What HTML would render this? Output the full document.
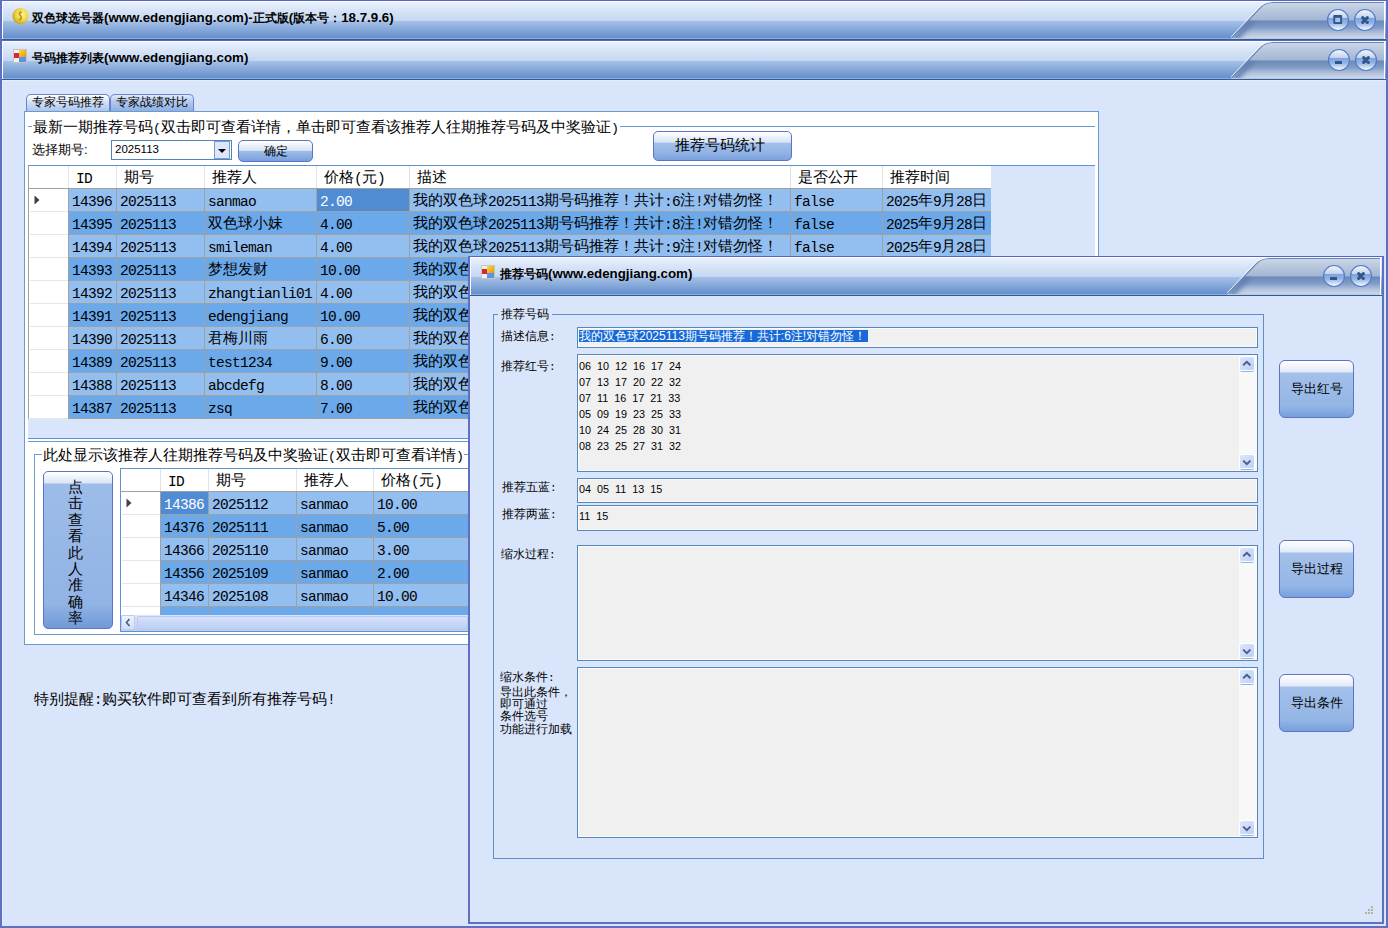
<!DOCTYPE html><html><head><meta charset="utf-8"><style>
*{margin:0;padding:0;box-sizing:border-box}
html,body{width:1388px;height:928px;overflow:hidden;background:#D9E5FA;font-family:"Liberation Sans",sans-serif;color:#000}
.abs{position:absolute}
.tb{position:absolute;height:40px;background:linear-gradient(to bottom,#5566C0 0,#5566C0 1px,#FFFFFF 1px,#FFFFFF 2px,#E8F0FD 2px,#C3D6F1 21px,#A6C1E7 21px,#6590CC 38px,#7CB0F8 38px,#7CB0F8 39px,#3F5A80 39px,#3F5A80 40px)}
.ttl{position:absolute;font-weight:bold;font-size:12px;white-space:nowrap;line-height:15px;color:#000}
.ttl .a{font-size:13.3px}
.grid{position:absolute;background:#D9E5FA;overflow:hidden}
.cell{position:absolute;white-space:nowrap;overflow:hidden;font-size:15px;line-height:22px;padding-left:3px}
.cell .a{font-family:"Liberation Mono",monospace;font-size:14.5px;letter-spacing:-0.7px;position:relative;top:1px}
.mono{font-family:"Liberation Mono",monospace}
.m .a{font-family:"Liberation Mono",monospace;font-size:0.92em}
.btn{position:absolute;border:1px solid #5C74C6;border-radius:5px;background:linear-gradient(to bottom,#FFFFFF 0%,#DCE7F7 30%,#A8C3EB 31%,#8FB2E5 75%,#76A0DC 100%);text-align:center;white-space:nowrap}
.fld{position:absolute;background:#F0F0F0;border:1px solid #5588BE;box-shadow:inset 0 0 0 1px #FCFAF6}
.lbl{position:absolute;font-size:12.5px;white-space:nowrap;line-height:14px}
.sb{position:absolute;background:#F8F8F8}
.sbb{position:absolute;width:14px;height:13px;border-radius:2px;background:linear-gradient(135deg,#DCE6FA,#BDD0F8);box-shadow:0 0 0 1px #FFFFFF,0 2px 0 0 #94B2E2}
</style></head><body>
<div class="abs" style="left:0;top:0;width:2px;height:928px;background:#5F70C2"></div>
<div class="abs" style="left:1386px;top:0;width:2px;height:928px;background:#5F70C2"></div>
<div class="abs" style="left:0;top:926px;width:1388px;height:2px;background:#5F70C2"></div>
<div class="abs" style="left:2px;top:80px;width:1px;height:846px;background:#E6EEFC"></div>
<div class="abs" style="left:2px;top:80px;width:1384px;height:1px;background:#E6EEFC"></div>
<div class="tb" style="left:2px;top:0px;width:1384px"></div>
<div class="abs" style="left:2px;top:1px;width:1px;height:38px;background:#FFFFFF"></div>
<svg class="abs" style="left:1231px;top:0px" width="155" height="40" viewBox="0 0 155 40">
<defs>
<linearGradient id="tg0" x1="0" y1="0" x2="0" y2="40" gradientUnits="userSpaceOnUse">
<stop offset="0.05" stop-color="#CCD7E7"/><stop offset="0.51" stop-color="#A3B5D3"/>
<stop offset="0.515" stop-color="#6A88B8"/><stop offset="0.68" stop-color="#7F9AC5"/><stop offset="0.82" stop-color="#AFC0DB"/><stop offset="0.94" stop-color="#CAD4E6"/>
</linearGradient>
<clipPath id="cp0"><path d="M0,38.5 L29,8 Q34,2.5 42,2.5 L154,2.5 L154,38.5 Z"/></clipPath>
<filter id="bl0" x="-50%" y="-50%" width="200%" height="200%"><feGaussianBlur stdDeviation="2.2"/></filter></defs>
<path d="M0,38.5 L29,8 Q34,2.5 42,2.5 L154,2.5 L154,38.5 Z" fill="url(#tg0)"/>
<clipPath id="cq0"><rect x="0" y="20.6" width="155" height="19"/></clipPath>
<g clip-path="url(#cp0)"><g clip-path="url(#cq0)"><path d="M3,40 L22,19" stroke="#5F7DB0" stroke-width="7" filter="url(#bl0)" opacity="0.85"/></g></g>
<path d="M0.5,38 L29,8 Q34,2.5 42,2.5 L154,2.5" fill="none" stroke="#6A86B4" stroke-width="1.1"/>
<path d="M-0.8,38 L28.2,7.3 Q33.2,1.8 42,1.6" fill="none" stroke="#FFFFFF" stroke-width="0.9" opacity="0.9"/>
<rect x="40" y="1" width="155" height="1" fill="#F4F7FC"/>
<rect x="0" y="38" width="155" height="1" fill="#A9CBF6"/>
<rect x="153" y="1" width="1" height="38" fill="#FFFFFF"/>
</svg>
<svg class="abs" style="left:11px;top:7px" width="18" height="18" viewBox="0 0 18 18">
<defs><radialGradient id="coin" cx="0.6" cy="0.4" r="0.7"><stop offset="0" stop-color="#FFF7A0"/><stop offset="0.6" stop-color="#EAD040"/><stop offset="1" stop-color="#B89000"/></radialGradient></defs>
<circle cx="9.5" cy="9" r="8" fill="url(#coin)"/>
<path d="M11,5.5 Q8,4.8 8.3,7.3 Q10.5,8.8 10.5,10.8 Q10,13 7.5,12.5" fill="none" stroke="#B89000" stroke-width="1.2"/><path d="M9.3,3.5 L9.3,14.5" stroke="#C8A000" stroke-width="0.8"/>
</svg>
<div class="ttl" style="left:32px;top:10px">双色球选号器<span class="a">(www.edengjiang.com)-</span>正式版<span class="a">(</span>版本号：<span class="a">18.7.9.6)</span></div>
<svg class="abs" style="left:1326px;top:8px" width="24" height="24" viewBox="0 0 24 24">
<defs><linearGradient id="bg00" x1="0" y1="0" x2="0" y2="1">
<stop offset="0.05" stop-color="#EEF2FA"/><stop offset="0.4" stop-color="#C4D2EA"/><stop offset="0.42" stop-color="#7FA3DA"/><stop offset="0.65" stop-color="#95B4E4"/><stop offset="0.95" stop-color="#F2F6FC"/></linearGradient></defs>
<circle cx="12" cy="12" r="10.5" fill="url(#bg00)" stroke="#4C7CCC" stroke-width="1.1"/>
<rect x="7.3" y="7" width="8.8" height="9" rx="1" fill="#2F5590"/><rect x="9.2" y="9.8" width="5" height="4.3" fill="#A9C1E8"/>
</svg>
<svg class="abs" style="left:1353px;top:8px" width="24" height="24" viewBox="0 0 24 24">
<defs><linearGradient id="bg01" x1="0" y1="0" x2="0" y2="1">
<stop offset="0.05" stop-color="#EEF2FA"/><stop offset="0.4" stop-color="#C4D2EA"/><stop offset="0.42" stop-color="#7FA3DA"/><stop offset="0.65" stop-color="#95B4E4"/><stop offset="0.95" stop-color="#F2F6FC"/></linearGradient></defs>
<circle cx="12" cy="12" r="10.5" fill="url(#bg01)" stroke="#4C7CCC" stroke-width="1.1"/>
<path d="M9.6,9.6 L14.4,14.4 M14.4,9.6 L9.6,14.4" stroke="#2F5590" stroke-width="3" stroke-linecap="round"/>
</svg>
<div class="tb" style="left:2px;top:40px;width:1384px"></div>
<div class="abs" style="left:2px;top:41px;width:1px;height:38px;background:#FFFFFF"></div>
<svg class="abs" style="left:1231px;top:40px" width="155" height="40" viewBox="0 0 155 40">
<defs>
<linearGradient id="tg40" x1="0" y1="0" x2="0" y2="40" gradientUnits="userSpaceOnUse">
<stop offset="0.05" stop-color="#CCD7E7"/><stop offset="0.51" stop-color="#A3B5D3"/>
<stop offset="0.515" stop-color="#6A88B8"/><stop offset="0.68" stop-color="#7F9AC5"/><stop offset="0.82" stop-color="#AFC0DB"/><stop offset="0.94" stop-color="#CAD4E6"/>
</linearGradient>
<clipPath id="cp40"><path d="M0,38.5 L29,8 Q34,2.5 42,2.5 L154,2.5 L154,38.5 Z"/></clipPath>
<filter id="bl40" x="-50%" y="-50%" width="200%" height="200%"><feGaussianBlur stdDeviation="2.2"/></filter></defs>
<path d="M0,38.5 L29,8 Q34,2.5 42,2.5 L154,2.5 L154,38.5 Z" fill="url(#tg40)"/>
<clipPath id="cq40"><rect x="0" y="20.6" width="155" height="19"/></clipPath>
<g clip-path="url(#cp40)"><g clip-path="url(#cq40)"><path d="M3,40 L22,19" stroke="#5F7DB0" stroke-width="7" filter="url(#bl40)" opacity="0.85"/></g></g>
<path d="M0.5,38 L29,8 Q34,2.5 42,2.5 L154,2.5" fill="none" stroke="#6A86B4" stroke-width="1.1"/>
<path d="M-0.8,38 L28.2,7.3 Q33.2,1.8 42,1.6" fill="none" stroke="#FFFFFF" stroke-width="0.9" opacity="0.9"/>
<rect x="40" y="1" width="155" height="1" fill="#F4F7FC"/>
<rect x="0" y="38" width="155" height="1" fill="#A9CBF6"/>
<rect x="153" y="1" width="1" height="38" fill="#FFFFFF"/>
</svg>
<svg class="abs" style="left:11px;top:47px" width="18" height="18" viewBox="0 0 18 18">
<rect x="2.5" y="2.5" width="13" height="13" fill="#EEF2F8" stroke="#CCC4BC" stroke-width="1"/>
<linearGradient id="ic40" x1="0" y1="0" x2="1" y2="1"><stop offset="0" stop-color="#FFD84A"/><stop offset="1" stop-color="#E09A00"/></linearGradient>
<rect x="8" y="3" width="7" height="7" fill="url(#ic40)"/>
<rect x="3" y="6" width="5" height="5" fill="#D42A2A"/>
<rect x="8" y="10" width="7" height="5" fill="#5A94EA"/>
</svg>
<div class="ttl" style="left:32px;top:50px">号码推荐列表<span class="a">(www.edengjiang.com)</span></div>
<svg class="abs" style="left:1327px;top:48px" width="24" height="24" viewBox="0 0 24 24">
<defs><linearGradient id="bg400" x1="0" y1="0" x2="0" y2="1">
<stop offset="0.05" stop-color="#EEF2FA"/><stop offset="0.4" stop-color="#C4D2EA"/><stop offset="0.42" stop-color="#7FA3DA"/><stop offset="0.65" stop-color="#95B4E4"/><stop offset="0.95" stop-color="#F2F6FC"/></linearGradient></defs>
<circle cx="12" cy="12" r="10.5" fill="url(#bg400)" stroke="#4C7CCC" stroke-width="1.1"/>
<rect x="8" y="13" width="7" height="3" fill="#2F5590"/>
</svg>
<svg class="abs" style="left:1354px;top:48px" width="24" height="24" viewBox="0 0 24 24">
<defs><linearGradient id="bg401" x1="0" y1="0" x2="0" y2="1">
<stop offset="0.05" stop-color="#EEF2FA"/><stop offset="0.4" stop-color="#C4D2EA"/><stop offset="0.42" stop-color="#7FA3DA"/><stop offset="0.65" stop-color="#95B4E4"/><stop offset="0.95" stop-color="#F2F6FC"/></linearGradient></defs>
<circle cx="12" cy="12" r="10.5" fill="url(#bg401)" stroke="#4C7CCC" stroke-width="1.1"/>
<path d="M9.6,9.6 L14.4,14.4 M14.4,9.6 L9.6,14.4" stroke="#2F5590" stroke-width="3" stroke-linecap="round"/>
</svg>
<div class="abs" style="left:26px;top:94px;width:84px;height:18px;border:1px solid #6A84CC;border-bottom:none;border-radius:5px 5px 0 0;background:linear-gradient(to bottom,#FFFFFF,#D5E2F6 40%,#A9C2EA);font-size:12px;line-height:14px;text-align:center">专家号码推荐</div>
<div class="abs" style="left:110px;top:94px;width:84px;height:17px;border:1px solid #6A84CC;border-bottom:none;border-radius:5px 5px 0 0;background:linear-gradient(to bottom,#E2EBFA,#B4CAEE 40%,#8EB0E4);font-size:12px;line-height:14px;text-align:center">专家战绩对比</div>
<div class="abs" style="left:24px;top:111px;width:1075px;height:534px;background:#FFFFFF;border:1px solid #6C9BD0"></div>
<div class="abs" style="left:28px;top:126px;width:4px;height:1px;background:#6C9BD0"></div>
<div class="abs" style="left:620px;top:126px;width:475px;height:1px;background:#6C9BD0"></div>
<div class="abs m" style="left:33px;top:119px;font-size:14.5px;line-height:16px;white-space:nowrap">最新一期推荐号码<span class="a">(</span>双击即可查看详情，单击即可查看该推荐人往期推荐号码及中奖验证<span class="a">)</span></div>
<div class="abs" style="left:32px;top:142px;font-size:13px;line-height:16px;white-space:nowrap">选择期号:</div>
<div class="abs" style="left:111px;top:140px;width:121px;height:20px;background:#FFFFFF;border:1px solid #4F83C2"></div>
<div class="abs" style="left:115px;top:142px;font-size:11.5px;line-height:14px">2025113</div>
<div class="abs" style="left:214px;top:141px;width:16px;height:18px;background:#DCE6F8;border:1px solid #7A9CCB"></div>
<svg class="abs" style="left:214px;top:141px" width="16" height="18"><path d="M4,8 L12,8 L8,12 Z" fill="#000"/></svg>
<div class="btn" style="left:238px;top:140px;width:75px;height:22px;font-size:12px;line-height:20px;background:linear-gradient(to bottom,#FFFFFF 0%,#D9E4F5 47%,#9DBCE8 52%,#89ADE2 80%,#76A0DC 100%)">确定</div>
<div class="btn" style="left:653px;top:131px;width:139px;height:30px;font-size:15px;line-height:26px;padding-right:5px;background:linear-gradient(to bottom,#FFFFFF 0%,#D9E4F5 36%,#A3C0EA 40%,#8DB0E4 80%,#79A2DC 100%)">推荐号码统计</div>
<div class="grid" style="left:28px;top:165px;width:1067px;height:274px;border-top:1px solid #5F93CF;border-bottom:1px solid #5F93CF"></div>
<div class="abs" style="left:28px;top:166px;width:963px;height:22px;background:#FFFFFF"></div>
<div class="abs" style="left:28px;top:188px;width:963px;height:1px;background:#A0A0A0"></div>
<div class="abs" style="left:68px;top:166px;width:1px;height:22px;background:#E2E2E2"></div>
<div class="abs" style="left:116px;top:166px;width:1px;height:22px;background:#E2E2E2"></div>
<div class="abs" style="left:204px;top:166px;width:1px;height:22px;background:#E2E2E2"></div>
<div class="abs" style="left:316px;top:166px;width:1px;height:22px;background:#E2E2E2"></div>
<div class="abs" style="left:409px;top:166px;width:1px;height:22px;background:#E2E2E2"></div>
<div class="abs" style="left:790px;top:166px;width:1px;height:22px;background:#E2E2E2"></div>
<div class="abs" style="left:882px;top:166px;width:1px;height:22px;background:#E2E2E2"></div>
<div class="abs" style="left:28px;top:166px;width:1px;height:22px;background:#A0A0A0"></div>
<div class="cell" style="left:69px;top:166px;width:47px;padding-left:7px;line-height:22px"><span class="a">ID</span></div>
<div class="cell" style="left:117px;top:166px;width:87px;padding-left:7px;line-height:22px">期号</div>
<div class="cell" style="left:205px;top:166px;width:111px;padding-left:7px;line-height:22px">推荐人</div>
<div class="cell" style="left:317px;top:166px;width:92px;padding-left:7px;line-height:22px">价格<span class="a">(</span>元<span class="a">)</span></div>
<div class="cell" style="left:410px;top:166px;width:380px;padding-left:7px;line-height:22px">描述</div>
<div class="cell" style="left:791px;top:166px;width:91px;padding-left:7px;line-height:22px">是否公开</div>
<div class="cell" style="left:883px;top:166px;width:108px;padding-left:7px;line-height:22px">推荐时间</div>
<div class="abs" style="left:28px;top:189px;width:40px;height:23px;background:#FFFFFF;border-left:1px solid #A0A0A0"></div>
<div class="abs" style="left:30px;top:211px;width:38px;height:1px;background:#E6E6E6"></div>
<div class="abs" style="left:68px;top:189px;width:923px;height:23px;background:#92BEF0;border-left:1px solid #A0A0A0;border-bottom:1px solid #A0A0A0"></div>
<div class="abs" style="left:116px;top:189px;width:1px;height:23px;background:#A0A0A0"></div>
<div class="abs" style="left:204px;top:189px;width:1px;height:23px;background:#A0A0A0"></div>
<div class="abs" style="left:316px;top:189px;width:1px;height:23px;background:#A0A0A0"></div>
<div class="abs" style="left:409px;top:189px;width:1px;height:23px;background:#A0A0A0"></div>
<div class="abs" style="left:790px;top:189px;width:1px;height:23px;background:#A0A0A0"></div>
<div class="abs" style="left:882px;top:189px;width:1px;height:23px;background:#A0A0A0"></div>
<svg class="abs" style="left:34px;top:195px" width="8" height="10"><path d="M0.5,0.5 L5.5,5 L0.5,9.5 Z" fill="#404040"/></svg>
<div class="cell" style="left:69px;top:189px;width:47px;"><span class="a">14396</span></div>
<div class="cell" style="left:117px;top:189px;width:87px;"><span class="a">2025113</span></div>
<div class="cell" style="left:205px;top:189px;width:111px;"><span class="a">sanmao</span></div>
<div class="abs" style="left:317px;top:189px;width:92px;height:22px;background:#508CD3"></div>
<div class="cell" style="left:317px;top:189px;width:92px;color:#FFFFFF;"><span class="a">2.00</span></div>
<div class="cell" style="left:410px;top:189px;width:380px;">我的双色球<span class="a">2025113</span>期号码推荐！共计<span class="a">:6</span>注<span class="a">!</span>对错勿怪！</div>
<div class="cell" style="left:791px;top:189px;width:91px;"><span class="a">false</span></div>
<div class="cell" style="left:883px;top:189px;width:108px;"><span class="a">2025</span>年<span class="a">9</span>月<span class="a">28</span>日</div>
<div class="abs" style="left:28px;top:212px;width:40px;height:23px;background:#FFFFFF;border-left:1px solid #A0A0A0"></div>
<div class="abs" style="left:30px;top:234px;width:38px;height:1px;background:#E6E6E6"></div>
<div class="abs" style="left:68px;top:212px;width:923px;height:23px;background:#6BA9EA;border-left:1px solid #A0A0A0;border-bottom:1px solid #A0A0A0"></div>
<div class="abs" style="left:116px;top:212px;width:1px;height:23px;background:#A0A0A0"></div>
<div class="abs" style="left:204px;top:212px;width:1px;height:23px;background:#A0A0A0"></div>
<div class="abs" style="left:316px;top:212px;width:1px;height:23px;background:#A0A0A0"></div>
<div class="abs" style="left:409px;top:212px;width:1px;height:23px;background:#A0A0A0"></div>
<div class="abs" style="left:790px;top:212px;width:1px;height:23px;background:#A0A0A0"></div>
<div class="abs" style="left:882px;top:212px;width:1px;height:23px;background:#A0A0A0"></div>
<div class="cell" style="left:69px;top:212px;width:47px;"><span class="a">14395</span></div>
<div class="cell" style="left:117px;top:212px;width:87px;"><span class="a">2025113</span></div>
<div class="cell" style="left:205px;top:212px;width:111px;">双色球小妹</div>
<div class="cell" style="left:317px;top:212px;width:92px;"><span class="a">4.00</span></div>
<div class="cell" style="left:410px;top:212px;width:380px;">我的双色球<span class="a">2025113</span>期号码推荐！共计<span class="a">:8</span>注<span class="a">!</span>对错勿怪！</div>
<div class="cell" style="left:791px;top:212px;width:91px;"><span class="a">false</span></div>
<div class="cell" style="left:883px;top:212px;width:108px;"><span class="a">2025</span>年<span class="a">9</span>月<span class="a">28</span>日</div>
<div class="abs" style="left:28px;top:235px;width:40px;height:23px;background:#FFFFFF;border-left:1px solid #A0A0A0"></div>
<div class="abs" style="left:30px;top:257px;width:38px;height:1px;background:#E6E6E6"></div>
<div class="abs" style="left:68px;top:235px;width:923px;height:23px;background:#92BEF0;border-left:1px solid #A0A0A0;border-bottom:1px solid #A0A0A0"></div>
<div class="abs" style="left:116px;top:235px;width:1px;height:23px;background:#A0A0A0"></div>
<div class="abs" style="left:204px;top:235px;width:1px;height:23px;background:#A0A0A0"></div>
<div class="abs" style="left:316px;top:235px;width:1px;height:23px;background:#A0A0A0"></div>
<div class="abs" style="left:409px;top:235px;width:1px;height:23px;background:#A0A0A0"></div>
<div class="abs" style="left:790px;top:235px;width:1px;height:23px;background:#A0A0A0"></div>
<div class="abs" style="left:882px;top:235px;width:1px;height:23px;background:#A0A0A0"></div>
<div class="cell" style="left:69px;top:235px;width:47px;"><span class="a">14394</span></div>
<div class="cell" style="left:117px;top:235px;width:87px;"><span class="a">2025113</span></div>
<div class="cell" style="left:205px;top:235px;width:111px;"><span class="a">smileman</span></div>
<div class="cell" style="left:317px;top:235px;width:92px;"><span class="a">4.00</span></div>
<div class="cell" style="left:410px;top:235px;width:380px;">我的双色球<span class="a">2025113</span>期号码推荐！共计<span class="a">:9</span>注<span class="a">!</span>对错勿怪！</div>
<div class="cell" style="left:791px;top:235px;width:91px;"><span class="a">false</span></div>
<div class="cell" style="left:883px;top:235px;width:108px;"><span class="a">2025</span>年<span class="a">9</span>月<span class="a">28</span>日</div>
<div class="abs" style="left:28px;top:258px;width:40px;height:23px;background:#FFFFFF;border-left:1px solid #A0A0A0"></div>
<div class="abs" style="left:30px;top:280px;width:38px;height:1px;background:#E6E6E6"></div>
<div class="abs" style="left:68px;top:258px;width:923px;height:23px;background:#6BA9EA;border-left:1px solid #A0A0A0;border-bottom:1px solid #A0A0A0"></div>
<div class="abs" style="left:116px;top:258px;width:1px;height:23px;background:#A0A0A0"></div>
<div class="abs" style="left:204px;top:258px;width:1px;height:23px;background:#A0A0A0"></div>
<div class="abs" style="left:316px;top:258px;width:1px;height:23px;background:#A0A0A0"></div>
<div class="abs" style="left:409px;top:258px;width:1px;height:23px;background:#A0A0A0"></div>
<div class="abs" style="left:790px;top:258px;width:1px;height:23px;background:#A0A0A0"></div>
<div class="abs" style="left:882px;top:258px;width:1px;height:23px;background:#A0A0A0"></div>
<div class="cell" style="left:69px;top:258px;width:47px;"><span class="a">14393</span></div>
<div class="cell" style="left:117px;top:258px;width:87px;"><span class="a">2025113</span></div>
<div class="cell" style="left:205px;top:258px;width:111px;">梦想发财</div>
<div class="cell" style="left:317px;top:258px;width:92px;"><span class="a">10.00</span></div>
<div class="cell" style="left:410px;top:258px;width:380px;">我的双色球<span class="a">2025113</span>期号码推荐！共计<span class="a">:6</span>注<span class="a">!</span>对错勿怪！</div>
<div class="cell" style="left:791px;top:258px;width:91px;"><span class="a">false</span></div>
<div class="cell" style="left:883px;top:258px;width:108px;"><span class="a">2025</span>年<span class="a">9</span>月<span class="a">28</span>日</div>
<div class="abs" style="left:28px;top:281px;width:40px;height:23px;background:#FFFFFF;border-left:1px solid #A0A0A0"></div>
<div class="abs" style="left:30px;top:303px;width:38px;height:1px;background:#E6E6E6"></div>
<div class="abs" style="left:68px;top:281px;width:923px;height:23px;background:#92BEF0;border-left:1px solid #A0A0A0;border-bottom:1px solid #A0A0A0"></div>
<div class="abs" style="left:116px;top:281px;width:1px;height:23px;background:#A0A0A0"></div>
<div class="abs" style="left:204px;top:281px;width:1px;height:23px;background:#A0A0A0"></div>
<div class="abs" style="left:316px;top:281px;width:1px;height:23px;background:#A0A0A0"></div>
<div class="abs" style="left:409px;top:281px;width:1px;height:23px;background:#A0A0A0"></div>
<div class="abs" style="left:790px;top:281px;width:1px;height:23px;background:#A0A0A0"></div>
<div class="abs" style="left:882px;top:281px;width:1px;height:23px;background:#A0A0A0"></div>
<div class="cell" style="left:69px;top:281px;width:47px;"><span class="a">14392</span></div>
<div class="cell" style="left:117px;top:281px;width:87px;"><span class="a">2025113</span></div>
<div class="cell" style="left:205px;top:281px;width:111px;"><span class="a">zhangtianli01</span></div>
<div class="cell" style="left:317px;top:281px;width:92px;"><span class="a">4.00</span></div>
<div class="cell" style="left:410px;top:281px;width:380px;">我的双色球<span class="a">2025113</span>期号码推荐！共计<span class="a">:6</span>注<span class="a">!</span>对错勿怪！</div>
<div class="cell" style="left:791px;top:281px;width:91px;"><span class="a">false</span></div>
<div class="cell" style="left:883px;top:281px;width:108px;"><span class="a">2025</span>年<span class="a">9</span>月<span class="a">28</span>日</div>
<div class="abs" style="left:28px;top:304px;width:40px;height:23px;background:#FFFFFF;border-left:1px solid #A0A0A0"></div>
<div class="abs" style="left:30px;top:326px;width:38px;height:1px;background:#E6E6E6"></div>
<div class="abs" style="left:68px;top:304px;width:923px;height:23px;background:#6BA9EA;border-left:1px solid #A0A0A0;border-bottom:1px solid #A0A0A0"></div>
<div class="abs" style="left:116px;top:304px;width:1px;height:23px;background:#A0A0A0"></div>
<div class="abs" style="left:204px;top:304px;width:1px;height:23px;background:#A0A0A0"></div>
<div class="abs" style="left:316px;top:304px;width:1px;height:23px;background:#A0A0A0"></div>
<div class="abs" style="left:409px;top:304px;width:1px;height:23px;background:#A0A0A0"></div>
<div class="abs" style="left:790px;top:304px;width:1px;height:23px;background:#A0A0A0"></div>
<div class="abs" style="left:882px;top:304px;width:1px;height:23px;background:#A0A0A0"></div>
<div class="cell" style="left:69px;top:304px;width:47px;"><span class="a">14391</span></div>
<div class="cell" style="left:117px;top:304px;width:87px;"><span class="a">2025113</span></div>
<div class="cell" style="left:205px;top:304px;width:111px;"><span class="a">edengjiang</span></div>
<div class="cell" style="left:317px;top:304px;width:92px;"><span class="a">10.00</span></div>
<div class="cell" style="left:410px;top:304px;width:380px;">我的双色球<span class="a">2025113</span>期号码推荐！共计<span class="a">:6</span>注<span class="a">!</span>对错勿怪！</div>
<div class="cell" style="left:791px;top:304px;width:91px;"><span class="a">false</span></div>
<div class="cell" style="left:883px;top:304px;width:108px;"><span class="a">2025</span>年<span class="a">9</span>月<span class="a">28</span>日</div>
<div class="abs" style="left:28px;top:327px;width:40px;height:23px;background:#FFFFFF;border-left:1px solid #A0A0A0"></div>
<div class="abs" style="left:30px;top:349px;width:38px;height:1px;background:#E6E6E6"></div>
<div class="abs" style="left:68px;top:327px;width:923px;height:23px;background:#92BEF0;border-left:1px solid #A0A0A0;border-bottom:1px solid #A0A0A0"></div>
<div class="abs" style="left:116px;top:327px;width:1px;height:23px;background:#A0A0A0"></div>
<div class="abs" style="left:204px;top:327px;width:1px;height:23px;background:#A0A0A0"></div>
<div class="abs" style="left:316px;top:327px;width:1px;height:23px;background:#A0A0A0"></div>
<div class="abs" style="left:409px;top:327px;width:1px;height:23px;background:#A0A0A0"></div>
<div class="abs" style="left:790px;top:327px;width:1px;height:23px;background:#A0A0A0"></div>
<div class="abs" style="left:882px;top:327px;width:1px;height:23px;background:#A0A0A0"></div>
<div class="cell" style="left:69px;top:327px;width:47px;"><span class="a">14390</span></div>
<div class="cell" style="left:117px;top:327px;width:87px;"><span class="a">2025113</span></div>
<div class="cell" style="left:205px;top:327px;width:111px;">君梅川雨</div>
<div class="cell" style="left:317px;top:327px;width:92px;"><span class="a">6.00</span></div>
<div class="cell" style="left:410px;top:327px;width:380px;">我的双色球<span class="a">2025113</span>期号码推荐！共计<span class="a">:6</span>注<span class="a">!</span>对错勿怪！</div>
<div class="cell" style="left:791px;top:327px;width:91px;"><span class="a">false</span></div>
<div class="cell" style="left:883px;top:327px;width:108px;"><span class="a">2025</span>年<span class="a">9</span>月<span class="a">28</span>日</div>
<div class="abs" style="left:28px;top:350px;width:40px;height:23px;background:#FFFFFF;border-left:1px solid #A0A0A0"></div>
<div class="abs" style="left:30px;top:372px;width:38px;height:1px;background:#E6E6E6"></div>
<div class="abs" style="left:68px;top:350px;width:923px;height:23px;background:#6BA9EA;border-left:1px solid #A0A0A0;border-bottom:1px solid #A0A0A0"></div>
<div class="abs" style="left:116px;top:350px;width:1px;height:23px;background:#A0A0A0"></div>
<div class="abs" style="left:204px;top:350px;width:1px;height:23px;background:#A0A0A0"></div>
<div class="abs" style="left:316px;top:350px;width:1px;height:23px;background:#A0A0A0"></div>
<div class="abs" style="left:409px;top:350px;width:1px;height:23px;background:#A0A0A0"></div>
<div class="abs" style="left:790px;top:350px;width:1px;height:23px;background:#A0A0A0"></div>
<div class="abs" style="left:882px;top:350px;width:1px;height:23px;background:#A0A0A0"></div>
<div class="cell" style="left:69px;top:350px;width:47px;"><span class="a">14389</span></div>
<div class="cell" style="left:117px;top:350px;width:87px;"><span class="a">2025113</span></div>
<div class="cell" style="left:205px;top:350px;width:111px;"><span class="a">test1234</span></div>
<div class="cell" style="left:317px;top:350px;width:92px;"><span class="a">9.00</span></div>
<div class="cell" style="left:410px;top:350px;width:380px;">我的双色球<span class="a">2025113</span>期号码推荐！共计<span class="a">:6</span>注<span class="a">!</span>对错勿怪！</div>
<div class="cell" style="left:791px;top:350px;width:91px;"><span class="a">false</span></div>
<div class="cell" style="left:883px;top:350px;width:108px;"><span class="a">2025</span>年<span class="a">9</span>月<span class="a">28</span>日</div>
<div class="abs" style="left:28px;top:373px;width:40px;height:23px;background:#FFFFFF;border-left:1px solid #A0A0A0"></div>
<div class="abs" style="left:30px;top:395px;width:38px;height:1px;background:#E6E6E6"></div>
<div class="abs" style="left:68px;top:373px;width:923px;height:23px;background:#92BEF0;border-left:1px solid #A0A0A0;border-bottom:1px solid #A0A0A0"></div>
<div class="abs" style="left:116px;top:373px;width:1px;height:23px;background:#A0A0A0"></div>
<div class="abs" style="left:204px;top:373px;width:1px;height:23px;background:#A0A0A0"></div>
<div class="abs" style="left:316px;top:373px;width:1px;height:23px;background:#A0A0A0"></div>
<div class="abs" style="left:409px;top:373px;width:1px;height:23px;background:#A0A0A0"></div>
<div class="abs" style="left:790px;top:373px;width:1px;height:23px;background:#A0A0A0"></div>
<div class="abs" style="left:882px;top:373px;width:1px;height:23px;background:#A0A0A0"></div>
<div class="cell" style="left:69px;top:373px;width:47px;"><span class="a">14388</span></div>
<div class="cell" style="left:117px;top:373px;width:87px;"><span class="a">2025113</span></div>
<div class="cell" style="left:205px;top:373px;width:111px;"><span class="a">abcdefg</span></div>
<div class="cell" style="left:317px;top:373px;width:92px;"><span class="a">8.00</span></div>
<div class="cell" style="left:410px;top:373px;width:380px;">我的双色球<span class="a">2025113</span>期号码推荐！共计<span class="a">:6</span>注<span class="a">!</span>对错勿怪！</div>
<div class="cell" style="left:791px;top:373px;width:91px;"><span class="a">false</span></div>
<div class="cell" style="left:883px;top:373px;width:108px;"><span class="a">2025</span>年<span class="a">9</span>月<span class="a">28</span>日</div>
<div class="abs" style="left:28px;top:396px;width:40px;height:23px;background:#FFFFFF;border-left:1px solid #A0A0A0"></div>
<div class="abs" style="left:30px;top:418px;width:38px;height:1px;background:#E6E6E6"></div>
<div class="abs" style="left:68px;top:396px;width:923px;height:23px;background:#6BA9EA;border-left:1px solid #A0A0A0;border-bottom:1px solid #A0A0A0"></div>
<div class="abs" style="left:116px;top:396px;width:1px;height:23px;background:#A0A0A0"></div>
<div class="abs" style="left:204px;top:396px;width:1px;height:23px;background:#A0A0A0"></div>
<div class="abs" style="left:316px;top:396px;width:1px;height:23px;background:#A0A0A0"></div>
<div class="abs" style="left:409px;top:396px;width:1px;height:23px;background:#A0A0A0"></div>
<div class="abs" style="left:790px;top:396px;width:1px;height:23px;background:#A0A0A0"></div>
<div class="abs" style="left:882px;top:396px;width:1px;height:23px;background:#A0A0A0"></div>
<div class="cell" style="left:69px;top:396px;width:47px;"><span class="a">14387</span></div>
<div class="cell" style="left:117px;top:396px;width:87px;"><span class="a">2025113</span></div>
<div class="cell" style="left:205px;top:396px;width:111px;"><span class="a">zsq</span></div>
<div class="cell" style="left:317px;top:396px;width:92px;"><span class="a">7.00</span></div>
<div class="cell" style="left:410px;top:396px;width:380px;">我的双色球<span class="a">2025113</span>期号码推荐！共计<span class="a">:6</span>注<span class="a">!</span>对错勿怪！</div>
<div class="cell" style="left:791px;top:396px;width:91px;"><span class="a">false</span></div>
<div class="cell" style="left:883px;top:396px;width:108px;"><span class="a">2025</span>年<span class="a">9</span>月<span class="a">28</span>日</div>
<div class="abs" style="left:28px;top:441px;width:1067px;height:1px;background:#6C9BD0"></div>
<div class="abs" style="left:34px;top:454px;width:1px;height:181px;background:#6C9BD0"></div>
<div class="abs" style="left:34px;top:454px;width:8px;height:1px;background:#6C9BD0"></div>
<div class="abs" style="left:464px;top:454px;width:628px;height:1px;background:#6C9BD0"></div>
<div class="abs" style="left:34px;top:634px;width:1060px;height:1px;background:#6C9BD0"></div>
<div class="abs m" style="left:43px;top:447px;font-size:14.5px;line-height:16px;white-space:nowrap">此处显示该推荐人往期推荐号码及中奖验证<span class="a">(</span>双击即可查看详情<span class="a">)</span></div>
<div class="btn" style="left:43px;top:471px;width:70px;height:158px;font-size:15px;line-height:16.4px;padding-top:7px;padding-right:5px;background:linear-gradient(to bottom,#FFFFFF 0,#DCE6F6 11px,#9DBCE8 12px,#91B3E5 85%,#7099D8 100%)">点<br>击<br>查<br>看<br>此<br>人<br>准<br>确<br>率</div>
<div class="abs" style="left:120px;top:468px;width:348px;height:164px;background:#D9E5FA;border:1px solid #5F93CF"></div>
<div class="abs" style="left:120px;top:469px;width:348px;height:22px;background:#FFFFFF"></div>
<div class="abs" style="left:120px;top:491px;width:348px;height:1px;background:#A0A0A0"></div>
<div class="abs" style="left:160px;top:469px;width:1px;height:22px;background:#E2E2E2"></div>
<div class="abs" style="left:208px;top:469px;width:1px;height:22px;background:#E2E2E2"></div>
<div class="abs" style="left:296px;top:469px;width:1px;height:22px;background:#E2E2E2"></div>
<div class="abs" style="left:373px;top:469px;width:1px;height:22px;background:#E2E2E2"></div>
<div class="abs" style="left:120px;top:469px;width:1px;height:22px;background:#5F93CF"></div>
<div class="cell" style="left:161px;top:469px;width:47px;padding-left:7px;line-height:22px"><span class="a">ID</span></div>
<div class="cell" style="left:209px;top:469px;width:87px;padding-left:7px;line-height:22px">期号</div>
<div class="cell" style="left:297px;top:469px;width:76px;padding-left:7px;line-height:22px">推荐人</div>
<div class="cell" style="left:374px;top:469px;width:94px;padding-left:7px;line-height:22px">价格<span class="a">(</span>元<span class="a">)</span></div>
<div class="abs" style="left:120px;top:492px;width:40px;height:23px;background:#FFFFFF;border-left:1px solid #5F93CF"></div>
<div class="abs" style="left:122px;top:514px;width:38px;height:1px;background:#E6E6E6"></div>
<div class="abs" style="left:160px;top:492px;width:308px;height:23px;background:#92BEF0;border-left:1px solid #A0A0A0;border-bottom:1px solid #A0A0A0"></div>
<div class="abs" style="left:208px;top:492px;width:1px;height:23px;background:#A0A0A0"></div>
<div class="abs" style="left:296px;top:492px;width:1px;height:23px;background:#A0A0A0"></div>
<div class="abs" style="left:373px;top:492px;width:1px;height:23px;background:#A0A0A0"></div>
<svg class="abs" style="left:126px;top:498px" width="8" height="10"><path d="M0.5,0.5 L5.5,5 L0.5,9.5 Z" fill="#404040"/></svg>
<div class="abs" style="left:161px;top:492px;width:47px;height:22px;background:#508CD3"></div>
<div class="cell" style="left:161px;top:492px;width:47px;color:#FFFFFF;"><span class="a">14386</span></div>
<div class="cell" style="left:209px;top:492px;width:87px;"><span class="a">2025112</span></div>
<div class="cell" style="left:297px;top:492px;width:76px;"><span class="a">sanmao</span></div>
<div class="cell" style="left:374px;top:492px;width:94px;"><span class="a">10.00</span></div>
<div class="abs" style="left:120px;top:515px;width:40px;height:23px;background:#FFFFFF;border-left:1px solid #5F93CF"></div>
<div class="abs" style="left:122px;top:537px;width:38px;height:1px;background:#E6E6E6"></div>
<div class="abs" style="left:160px;top:515px;width:308px;height:23px;background:#6BA9EA;border-left:1px solid #A0A0A0;border-bottom:1px solid #A0A0A0"></div>
<div class="abs" style="left:208px;top:515px;width:1px;height:23px;background:#A0A0A0"></div>
<div class="abs" style="left:296px;top:515px;width:1px;height:23px;background:#A0A0A0"></div>
<div class="abs" style="left:373px;top:515px;width:1px;height:23px;background:#A0A0A0"></div>
<div class="cell" style="left:161px;top:515px;width:47px;"><span class="a">14376</span></div>
<div class="cell" style="left:209px;top:515px;width:87px;"><span class="a">2025111</span></div>
<div class="cell" style="left:297px;top:515px;width:76px;"><span class="a">sanmao</span></div>
<div class="cell" style="left:374px;top:515px;width:94px;"><span class="a">5.00</span></div>
<div class="abs" style="left:120px;top:538px;width:40px;height:23px;background:#FFFFFF;border-left:1px solid #5F93CF"></div>
<div class="abs" style="left:122px;top:560px;width:38px;height:1px;background:#E6E6E6"></div>
<div class="abs" style="left:160px;top:538px;width:308px;height:23px;background:#92BEF0;border-left:1px solid #A0A0A0;border-bottom:1px solid #A0A0A0"></div>
<div class="abs" style="left:208px;top:538px;width:1px;height:23px;background:#A0A0A0"></div>
<div class="abs" style="left:296px;top:538px;width:1px;height:23px;background:#A0A0A0"></div>
<div class="abs" style="left:373px;top:538px;width:1px;height:23px;background:#A0A0A0"></div>
<div class="cell" style="left:161px;top:538px;width:47px;"><span class="a">14366</span></div>
<div class="cell" style="left:209px;top:538px;width:87px;"><span class="a">2025110</span></div>
<div class="cell" style="left:297px;top:538px;width:76px;"><span class="a">sanmao</span></div>
<div class="cell" style="left:374px;top:538px;width:94px;"><span class="a">3.00</span></div>
<div class="abs" style="left:120px;top:561px;width:40px;height:23px;background:#FFFFFF;border-left:1px solid #5F93CF"></div>
<div class="abs" style="left:122px;top:583px;width:38px;height:1px;background:#E6E6E6"></div>
<div class="abs" style="left:160px;top:561px;width:308px;height:23px;background:#6BA9EA;border-left:1px solid #A0A0A0;border-bottom:1px solid #A0A0A0"></div>
<div class="abs" style="left:208px;top:561px;width:1px;height:23px;background:#A0A0A0"></div>
<div class="abs" style="left:296px;top:561px;width:1px;height:23px;background:#A0A0A0"></div>
<div class="abs" style="left:373px;top:561px;width:1px;height:23px;background:#A0A0A0"></div>
<div class="cell" style="left:161px;top:561px;width:47px;"><span class="a">14356</span></div>
<div class="cell" style="left:209px;top:561px;width:87px;"><span class="a">2025109</span></div>
<div class="cell" style="left:297px;top:561px;width:76px;"><span class="a">sanmao</span></div>
<div class="cell" style="left:374px;top:561px;width:94px;"><span class="a">2.00</span></div>
<div class="abs" style="left:120px;top:584px;width:40px;height:23px;background:#FFFFFF;border-left:1px solid #5F93CF"></div>
<div class="abs" style="left:122px;top:606px;width:38px;height:1px;background:#E6E6E6"></div>
<div class="abs" style="left:160px;top:584px;width:308px;height:23px;background:#92BEF0;border-left:1px solid #A0A0A0;border-bottom:1px solid #A0A0A0"></div>
<div class="abs" style="left:208px;top:584px;width:1px;height:23px;background:#A0A0A0"></div>
<div class="abs" style="left:296px;top:584px;width:1px;height:23px;background:#A0A0A0"></div>
<div class="abs" style="left:373px;top:584px;width:1px;height:23px;background:#A0A0A0"></div>
<div class="cell" style="left:161px;top:584px;width:47px;"><span class="a">14346</span></div>
<div class="cell" style="left:209px;top:584px;width:87px;"><span class="a">2025108</span></div>
<div class="cell" style="left:297px;top:584px;width:76px;"><span class="a">sanmao</span></div>
<div class="cell" style="left:374px;top:584px;width:94px;"><span class="a">10.00</span></div>
<div class="abs" style="left:120px;top:607px;width:40px;height:23px;background:#FFFFFF;border-left:1px solid #5F93CF"></div>
<div class="abs" style="left:122px;top:629px;width:38px;height:1px;background:#E6E6E6"></div>
<div class="abs" style="left:160px;top:607px;width:308px;height:23px;background:#6BA9EA;border-left:1px solid #A0A0A0;border-bottom:1px solid #A0A0A0"></div>
<div class="abs" style="left:208px;top:607px;width:1px;height:23px;background:#A0A0A0"></div>
<div class="abs" style="left:296px;top:607px;width:1px;height:23px;background:#A0A0A0"></div>
<div class="abs" style="left:373px;top:607px;width:1px;height:23px;background:#A0A0A0"></div>
<div class="cell" style="left:161px;top:607px;width:47px;"></div>
<div class="cell" style="left:209px;top:607px;width:87px;"></div>
<div class="cell" style="left:297px;top:607px;width:76px;"></div>
<div class="cell" style="left:374px;top:607px;width:94px;"></div>
<div class="abs" style="left:121px;top:615px;width:347px;height:16px;background:linear-gradient(to bottom,#DCE6FC,#BCCEF6)"></div>
<div class="abs" style="left:121px;top:615px;width:14px;height:15px;border:1px solid #B8CCEE;border-radius:2px;background:linear-gradient(to bottom,#F0F4FC,#D0DEF6)"></div>
<svg class="abs" style="left:121px;top:615px" width="14" height="15"><path d="M8.5,4 L5.5,7.5 L8.5,11" fill="none" stroke="#4A5A80" stroke-width="1.6"/></svg>
<div class="abs" style="left:137px;top:616px;width:331px;height:14px;border:1px solid #B8CAF0;border-radius:2px;background:linear-gradient(to bottom,#D6E2FA,#BCCEF4)"></div>
<div class="abs m" style="left:34px;top:690px;font-size:15px;line-height:17px;white-space:nowrap">特别提醒<span class="a">:</span>购买软件即可查看到所有推荐号码<span class="a">!</span></div>
<div class="abs" style="left:468px;top:256px;width:916px;height:668px;background:#D9E5FA;border:2px solid #5F70C2;border-top:none"></div>
<div class="tb" style="left:470px;top:256px;width:912px"></div>
<div class="abs" style="left:470px;top:257px;width:1px;height:38px;background:#FFFFFF"></div>
<svg class="abs" style="left:1227px;top:256px" width="155" height="40" viewBox="0 0 155 40">
<defs>
<linearGradient id="tg256" x1="0" y1="0" x2="0" y2="40" gradientUnits="userSpaceOnUse">
<stop offset="0.05" stop-color="#CCD7E7"/><stop offset="0.51" stop-color="#A3B5D3"/>
<stop offset="0.515" stop-color="#6A88B8"/><stop offset="0.68" stop-color="#7F9AC5"/><stop offset="0.82" stop-color="#AFC0DB"/><stop offset="0.94" stop-color="#CAD4E6"/>
</linearGradient>
<clipPath id="cp256"><path d="M0,38.5 L29,8 Q34,2.5 42,2.5 L154,2.5 L154,38.5 Z"/></clipPath>
<filter id="bl256" x="-50%" y="-50%" width="200%" height="200%"><feGaussianBlur stdDeviation="2.2"/></filter></defs>
<path d="M0,38.5 L29,8 Q34,2.5 42,2.5 L154,2.5 L154,38.5 Z" fill="url(#tg256)"/>
<clipPath id="cq256"><rect x="0" y="20.6" width="155" height="19"/></clipPath>
<g clip-path="url(#cp256)"><g clip-path="url(#cq256)"><path d="M3,40 L22,19" stroke="#5F7DB0" stroke-width="7" filter="url(#bl256)" opacity="0.85"/></g></g>
<path d="M0.5,38 L29,8 Q34,2.5 42,2.5 L154,2.5" fill="none" stroke="#6A86B4" stroke-width="1.1"/>
<path d="M-0.8,38 L28.2,7.3 Q33.2,1.8 42,1.6" fill="none" stroke="#FFFFFF" stroke-width="0.9" opacity="0.9"/>
<rect x="40" y="1" width="155" height="1" fill="#F4F7FC"/>
<rect x="0" y="38" width="155" height="1" fill="#A9CBF6"/>
<rect x="153" y="1" width="1" height="38" fill="#FFFFFF"/>
</svg>
<svg class="abs" style="left:479px;top:263px" width="18" height="18" viewBox="0 0 18 18">
<rect x="2.5" y="2.5" width="13" height="13" fill="#EEF2F8" stroke="#CCC4BC" stroke-width="1"/>
<linearGradient id="ic256" x1="0" y1="0" x2="1" y2="1"><stop offset="0" stop-color="#FFD84A"/><stop offset="1" stop-color="#E09A00"/></linearGradient>
<rect x="8" y="3" width="7" height="7" fill="url(#ic256)"/>
<rect x="3" y="6" width="5" height="5" fill="#D42A2A"/>
<rect x="8" y="10" width="7" height="5" fill="#5A94EA"/>
</svg>
<div class="ttl" style="left:500px;top:266px">推荐号码<span class="a">(www.edengjiang.com)</span></div>
<svg class="abs" style="left:1322px;top:264px" width="24" height="24" viewBox="0 0 24 24">
<defs><linearGradient id="bg2560" x1="0" y1="0" x2="0" y2="1">
<stop offset="0.05" stop-color="#EEF2FA"/><stop offset="0.4" stop-color="#C4D2EA"/><stop offset="0.42" stop-color="#7FA3DA"/><stop offset="0.65" stop-color="#95B4E4"/><stop offset="0.95" stop-color="#F2F6FC"/></linearGradient></defs>
<circle cx="12" cy="12" r="10.5" fill="url(#bg2560)" stroke="#4C7CCC" stroke-width="1.1"/>
<rect x="8" y="13" width="7" height="3" fill="#2F5590"/>
</svg>
<svg class="abs" style="left:1349px;top:264px" width="24" height="24" viewBox="0 0 24 24">
<defs><linearGradient id="bg2561" x1="0" y1="0" x2="0" y2="1">
<stop offset="0.05" stop-color="#EEF2FA"/><stop offset="0.4" stop-color="#C4D2EA"/><stop offset="0.42" stop-color="#7FA3DA"/><stop offset="0.65" stop-color="#95B4E4"/><stop offset="0.95" stop-color="#F2F6FC"/></linearGradient></defs>
<circle cx="12" cy="12" r="10.5" fill="url(#bg2561)" stroke="#4C7CCC" stroke-width="1.1"/>
<path d="M9.6,9.6 L14.4,14.4 M14.4,9.6 L9.6,14.4" stroke="#2F5590" stroke-width="3" stroke-linecap="round"/>
</svg>
<div class="abs" style="left:468px;top:256px;width:2px;height:40px;background:#5F70C2"></div>
<div class="abs" style="left:1382px;top:256px;width:2px;height:40px;background:#5F70C2"></div>
<div class="abs" style="left:493px;top:314px;width:771px;height:545px;border:1px solid #5E90C6;border-top:none"></div>
<div class="abs" style="left:493px;top:314px;width:5px;height:1px;background:#5E90C6"></div>
<div class="abs" style="left:552px;top:314px;width:712px;height:1px;background:#5E90C6"></div>
<div class="lbl" style="left:501px;top:307px;font-size:12px">推荐号码</div>
<div class="lbl m" style="left:501px;top:329px;font-size:12px">描述信息<span class="a">:</span></div>
<div class="lbl m" style="left:501px;top:359px;font-size:12px">推荐红号<span class="a">:</span></div>
<div class="lbl m" style="left:502px;top:480px;font-size:12px">推荐五蓝<span class="a">:</span></div>
<div class="lbl m" style="left:502px;top:507px;font-size:12px">推荐两蓝<span class="a">:</span></div>
<div class="lbl m" style="left:501px;top:547px;font-size:12px">缩水过程<span class="a">:</span></div>
<div class="lbl m" style="left:500px;top:670px;font-size:12px">缩水条件<span class="a">:</span></div>
<div class="abs" style="left:500px;top:686px;font-size:12px;line-height:12.2px;white-space:nowrap">导出此条件，<br>即可通过<br>条件选号<br>功能进行加载</div>
<div class="fld" style="left:577px;top:327px;width:681px;height:21px"></div>
<div class="abs" style="left:579px;top:330px;height:12px;background:#166AD8;color:#FFFFFF;font-size:12px;line-height:12px;white-space:nowrap;padding-right:2px">我的双色球2025113期号码推荐！共计:6注!对错勿怪！</div>
<div class="fld" style="left:577px;top:354px;width:681px;height:118px"></div>
<div class="sb" style="left:1239px;top:355px;width:18px;height:116px"></div>
<div class="sbb" style="left:1240px;top:357px"></div>
<svg class="abs" style="left:1239px;top:356px" width="16" height="15"><path d="M4.2,9.3 L7.8,5.8 L11.4,9.3" fill="none" stroke="#4A5E8E" stroke-width="2"/></svg>
<div class="sbb" style="left:1240px;top:455px"></div>
<svg class="abs" style="left:1239px;top:454px" width="16" height="15"><path d="M4.2,6.6 L7.8,10.1 L11.4,6.6" fill="none" stroke="#4A5E8E" stroke-width="2"/></svg>
<div class="fld" style="left:577px;top:478px;width:681px;height:25px"></div>
<div class="fld" style="left:577px;top:505px;width:681px;height:26px"></div>
<div class="fld" style="left:577px;top:545px;width:681px;height:116px"></div>
<div class="sb" style="left:1239px;top:546px;width:18px;height:114px"></div>
<div class="sbb" style="left:1240px;top:548px"></div>
<svg class="abs" style="left:1239px;top:547px" width="16" height="15"><path d="M4.2,9.3 L7.8,5.8 L11.4,9.3" fill="none" stroke="#4A5E8E" stroke-width="2"/></svg>
<div class="sbb" style="left:1240px;top:644px"></div>
<svg class="abs" style="left:1239px;top:643px" width="16" height="15"><path d="M4.2,6.6 L7.8,10.1 L11.4,6.6" fill="none" stroke="#4A5E8E" stroke-width="2"/></svg>
<div class="fld" style="left:577px;top:667px;width:681px;height:171px"></div>
<div class="sb" style="left:1239px;top:668px;width:18px;height:169px"></div>
<div class="sbb" style="left:1240px;top:670px"></div>
<svg class="abs" style="left:1239px;top:669px" width="16" height="15"><path d="M4.2,9.3 L7.8,5.8 L11.4,9.3" fill="none" stroke="#4A5E8E" stroke-width="2"/></svg>
<div class="sbb" style="left:1240px;top:821px"></div>
<svg class="abs" style="left:1239px;top:820px" width="16" height="15"><path d="M4.2,6.6 L7.8,10.1 L11.4,6.6" fill="none" stroke="#4A5E8E" stroke-width="2"/></svg>
<div class="abs" style="left:579px;top:358px;font-size:10.8px;line-height:16px;white-space:pre;word-spacing:3px">06 10 12 16 17 24
07 13 17 20 22 32
07 11 16 17 21 33
05 09 19 23 25 33
10 24 25 28 30 31
08 23 25 27 31 32</div>
<div class="abs" style="left:579px;top:482px;font-size:10.8px;line-height:14px;white-space:pre;word-spacing:3px">04 05 11 13 15</div>
<div class="abs" style="left:579px;top:509px;font-size:10.8px;line-height:14px;white-space:pre;word-spacing:3px">11 15</div>
<div class="btn" style="left:1279px;top:360px;width:75px;height:58px;font-size:13px;line-height:56px;border-radius:6px;background:linear-gradient(to bottom,#FFFFFF 0,#E2EAF8 11px,#A3C0EA 12px,#94B6E6 80%,#76A0DC 100%)">导出红号</div>
<div class="btn" style="left:1279px;top:540px;width:75px;height:58px;font-size:13px;line-height:56px;border-radius:6px;background:linear-gradient(to bottom,#FFFFFF 0,#E2EAF8 11px,#A3C0EA 12px,#94B6E6 80%,#76A0DC 100%)">导出过程</div>
<div class="btn" style="left:1279px;top:674px;width:75px;height:58px;font-size:13px;line-height:56px;border-radius:6px;background:linear-gradient(to bottom,#FFFFFF 0,#E2EAF8 11px,#A3C0EA 12px,#94B6E6 80%,#76A0DC 100%)">导出条件</div>
<svg class="abs" style="left:1364px;top:904px" width="12" height="12"><g fill="#B8B0A0"><rect x="7" y="2" width="2" height="2"/><rect x="4" y="5" width="2" height="2"/><rect x="7" y="5" width="2" height="2"/><rect x="1" y="8" width="2" height="2"/><rect x="4" y="8" width="2" height="2"/><rect x="7" y="8" width="2" height="2"/></g></svg>
</body></html>
